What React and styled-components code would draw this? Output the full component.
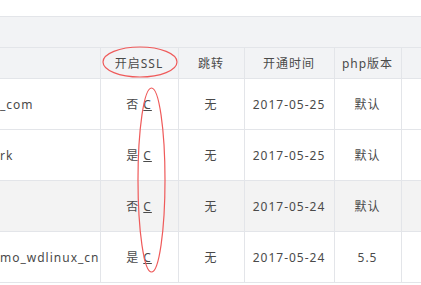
import styled, { createGlobalStyle } from "styled-components";

const GlobalStyle = createGlobalStyle`
  html, body {
    margin: 0;
    padding: 0;
    background: #fff;
  }
  body {
    font-family: "Noto Sans", "Noto Sans CJK SC", sans-serif;
    font-size: 12px;
    color: #4a4a4a;
  }
`;

const sites = [
  { name: "_com", ssl: "否", jump: "无", date: "2017-05-25", php: "默认" },
  { name: "rk", ssl: "是", jump: "无", date: "2017-05-25", php: "默认" },
  { name: "", ssl: "否", jump: "无", date: "2017-05-24", php: "默认", shaded: true },
  { name: "mo_wdlinux_cn", ssl: "是", jump: "无", date: "2017-05-24", php: "5.5" },
];

export default function App() {
  return (
    <>
      <GlobalStyle />
      <Page>
        <Toolbar />
        <Table>
          <colgroup>
            <col style={{ width: 100 }} />
            <col style={{ width: 78 }} />
            <col style={{ width: 66 }} />
            <col style={{ width: 90 }} />
            <col style={{ width: 67 }} />
            <col style={{ width: 60 }} />
          </colgroup>
          <thead>
            <tr>
              <Th />
              <Th>开启SSL</Th>
              <Th>跳转</Th>
              <Th>开通时间</Th>
              <Th>php版本</Th>
              <Th />
            </tr>
          </thead>
          <tbody>
            {sites.map((s, i) => (
              <Row key={i} $shaded={s.shaded}>
                <NameCell>{s.name}</NameCell>
                <Td>
                  {s.ssl}&nbsp;<Link>C</Link>
                </Td>
                <Td>{s.jump}</Td>
                <Td>{s.date}</Td>
                <Td>{s.php}</Td>
                <Td />
              </Row>
            ))}
          </tbody>
        </Table>
        <Marks width="421" height="285" viewBox="0 0 421 285">
          <ellipse cx="140" cy="62" rx="37" ry="15" />
          <ellipse cx="151.5" cy="180" rx="13.5" ry="92" />
        </Marks>
      </Page>
    </>
  );
}

const Page = styled.div`
  position: relative;
  width: 421px;
  height: 285px;
  overflow: hidden;
  padding-top: 16px;
  box-sizing: border-box;
`;

const Toolbar = styled.div`
  height: 30px;
  background: #f2f3f5;
  border-top: 1px solid #e3e5e9;
`;

const Table = styled.table`
  border-collapse: collapse;
  table-layout: fixed;
  width: 461px;
  letter-spacing: 1px;
`;

const Th = styled.th`
  height: 30px;
  padding: 0;
  font-weight: normal;
  background: #f2f3f5;
  border: 1px solid #e3e5e9;
  border-left: none;
  text-align: center;
`;

const Row = styled.tr`
  background: ${(p) => (p.$shaded ? "#f3f3f3" : "#fff")};
`;

const Td = styled.td`
  height: 50px;
  padding: 0;
  border-bottom: 1px solid #e3e5e9;
  border-right: 1px solid #e3e5e9;
  text-align: center;
  white-space: nowrap;
`;

const NameCell = styled(Td)`
  text-align: left;
  overflow: hidden;
`;

const Link = styled.span`
  text-decoration: underline;
`;

const Marks = styled.svg`
  position: absolute;
  left: 0;
  top: 0;
  pointer-events: none;
  fill: none;
  stroke: #ef5a5a;
  stroke-width: 1.2;
`;
